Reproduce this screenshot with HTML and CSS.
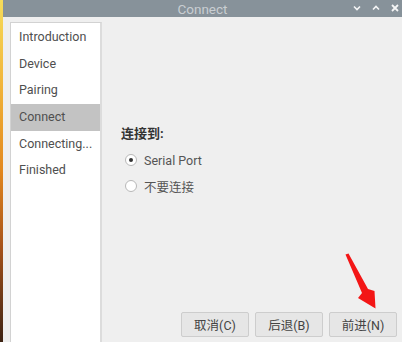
FILE: index.html
```html
<!DOCTYPE html>
<html lang="zh">
<head>
  <meta charset="UTF-8">
  <title>Connect</title>
  <link rel="stylesheet" href="styles.css">
</head>
<body>
  <div class="wallpaper"></div>

  <div class="window">
    <div class="titlebar">
      <span class="title">Connect</span>
      <div class="controls">
        <svg width="8" height="6" viewBox="0 0 8 6"><path d="M1 1.5 L4 4.5 L7 1.5" fill="none" stroke="#f4f5f6" stroke-width="1.6"/></svg>
        <svg width="8" height="6" viewBox="0 0 8 6"><path d="M1 4.5 L4 1.5 L7 4.5" fill="none" stroke="#f4f5f6" stroke-width="1.6"/></svg>
        <svg width="8" height="8" viewBox="0 0 8 8"><path d="M1 1 L7 7 M7 1 L1 7" fill="none" stroke="#f4f5f6" stroke-width="1.8"/></svg>
      </div>
    </div>

    <div class="body">
      <ul class="steps">
        <li>Introduction</li>
        <li>Device</li>
        <li>Pairing</li>
        <li class="active">Connect</li>
        <li>Connecting...</li>
        <li>Finished</li>
      </ul>

      <div class="main">
        <div class="page">
          <div class="label">连接到:</div>
          <label class="radio"><span class="dot checked"></span>Serial Port</label>
          <label class="radio"><span class="dot"></span>不要连接</label>
        </div>

        <div class="buttons">
          <button class="btn">取消(C)</button>
          <button class="btn">后退(B)</button>
          <button class="btn">前进(N)</button>
        </div>
      </div>
    </div>
  </div>

  <svg class="arrow" width="402" height="342" viewBox="0 0 402 342">
    <polygon points="345.5,254.5 348.5,253.5 368,289 374.5,291 375.5,308.5 358,298 362,293" fill="#f31616"/>
  </svg>
</body>
</html>
```

FILE: styles.css
```css
body {
  margin: 0;
  width: 402px;
  height: 342px;
  overflow: hidden;
  display: flex;
  font-family: Roboto, "Noto Sans CJK SC", sans-serif;
  font-size: 12.5px;
  color: #4a4a4a;
  position: relative;
}

.wallpaper {
  width: 3px;
  flex-shrink: 0;
  background: linear-gradient(180deg, #f6dc5a 0%, #f1b43a 25%, #e2881f 50%, #a7531a 72%, #3d2314 100%);
}

.window {
  flex: 1;
  display: flex;
  flex-direction: column;
  background: #efefef;
}

.titlebar {
  height: 17px;
  flex-shrink: 0;
  background: #87929a;
  display: flex;
  align-items: center;
  justify-content: center;
  position: relative;
}

.title {
  color: #c9ced2;
  font-size: 13.5px;
}

.controls {
  position: absolute;
  right: 3px;
  top: 4px;
  display: flex;
  align-items: center;
  gap: 11px;
}

.body {
  flex: 1;
  display: flex;
}

.steps {
  list-style: none;
  margin: 5px 0 0 7px;
  padding: 1px 0 0;
  width: 89px;
  background: #fff;
  border: 1px solid #d2d2d2;
  border-bottom: none;
  border-right: 2px solid #dcdcdc;
}

.steps li {
  height: 26.7px;
  line-height: 26.7px;
  padding-left: 8px;
  color: #4f4f4f;
}

.steps li.active {
  background: #c3c3c3;
}

.main {
  flex: 1;
  display: flex;
  flex-direction: column;
}

.page {
  flex: 1;
  padding: 105px 0 0 19px;
}

.label {
  font-weight: bold;
  color: #333;
  height: 25px;
  line-height: 24px;
  font-size: 13px;
}

.radio {
  display: flex;
  align-items: center;
  height: 26px;
  padding-left: 4px;
  color: #555;
}

.dot {
  width: 10px;
  height: 10px;
  border: 1px solid #b8b8b8;
  border-radius: 50%;
  background: #fff;
  margin-right: 7px;
  display: flex;
  align-items: center;
  justify-content: center;
}

.dot.checked::after {
  content: "";
  width: 4px;
  height: 4px;
  border-radius: 50%;
  background: #333;
}

.buttons {
  display: flex;
  justify-content: flex-end;
  gap: 6px;
  padding: 0 5px 5px 0;
}

.btn {
  width: 68px;
  height: 25px;
  background: #e6e6e6;
  border: 1px solid #cdcdcd;
  border-radius: 2px;
  font-family: Roboto, "Noto Sans CJK SC", sans-serif;
  font-size: 12.5px;
  color: #444;
  padding: 0;
}

.arrow {
  position: absolute;
  left: 0;
  top: 0;
  pointer-events: none;
}
```
